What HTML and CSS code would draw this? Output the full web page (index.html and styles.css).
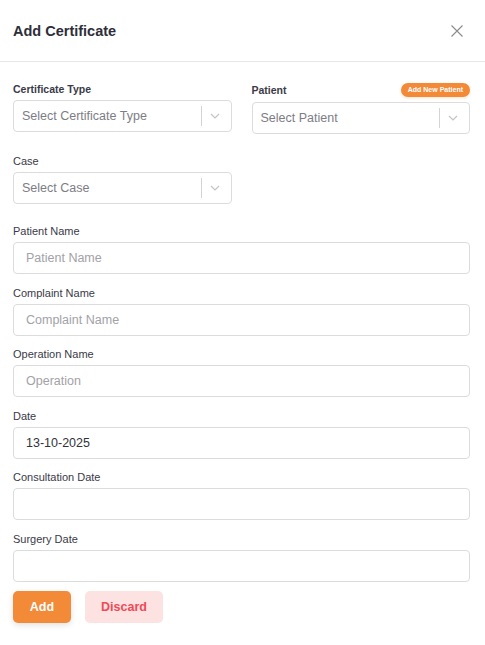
FILE: index.html
```html
<!DOCTYPE html>
<html>
<head>
<meta charset="utf-8">
<link rel="stylesheet" href="styles.css">
</head>
<body>
<div class="modal">
  <div class="header">
    <h1 class="title">Add Certificate</h1>
    <svg class="close" width="12" height="12" viewBox="0 0 12 12"><path d="M0.5 0.5L11.5 11.5M11.5 0.5L0.5 11.5" stroke="#8a8a8a" stroke-width="1.1" fill="none"/></svg>
  </div>
  <div class="body">
    <div class="row">
      <div class="field">
        <div class="label-row"><span class="label strong">Certificate Type</span></div>
        <div class="select">
          <span class="ph-select">Select Certificate Type</span>
          <span class="indicators"><span class="sep"></span><svg width="10" height="6" viewBox="0 0 10 6"><path d="M1 1L5 5L9 1" stroke="#c4c4c4" stroke-width="1.2" fill="none"/></svg></span>
        </div>
      </div>
      <div class="field">
        <div class="label-row tall"><span class="label strong">Patient</span><span class="badge">Add New Patient</span></div>
        <div class="select">
          <span class="ph-select">Select Patient</span>
          <span class="indicators"><span class="sep"></span><svg width="10" height="6" viewBox="0 0 10 6"><path d="M1 1L5 5L9 1" stroke="#c4c4c4" stroke-width="1.2" fill="none"/></svg></span>
        </div>
      </div>
    </div>
    <div class="row case-row">
      <div class="field">
        <div class="label-row"><span class="label">Case</span></div>
        <div class="select">
          <span class="ph-select">Select Case</span>
          <span class="indicators"><span class="sep"></span><svg width="10" height="6" viewBox="0 0 10 6"><path d="M1 1L5 5L9 1" stroke="#c4c4c4" stroke-width="1.2" fill="none"/></svg></span>
        </div>
      </div>
      <div class="field"></div>
    </div>
    <div class="stack">
      <div class="field">
        <div class="label-row"><span class="label">Patient Name</span></div>
        <div class="input"><span class="ph">Patient Name</span></div>
      </div>
      <div class="field">
        <div class="label-row"><span class="label">Complaint Name</span></div>
        <div class="input"><span class="ph">Complaint Name</span></div>
      </div>
      <div class="field">
        <div class="label-row"><span class="label">Operation Name</span></div>
        <div class="input"><span class="ph">Operation</span></div>
      </div>
      <div class="field">
        <div class="label-row"><span class="label">Date</span></div>
        <div class="input"><span class="val">13-10-2025</span></div>
      </div>
      <div class="field">
        <div class="label-row"><span class="label">Consultation Date</span></div>
        <div class="input"></div>
      </div>
      <div class="field">
        <div class="label-row"><span class="label">Surgery Date</span></div>
        <div class="input"></div>
      </div>
    </div>
    <div class="actions">
      <button class="btn add">Add</button>
      <button class="btn discard">Discard</button>
    </div>
  </div>
</div>
</body>
</html>
```
FILE: styles.css
```css
* { box-sizing: border-box; }
html, body { margin: 0; padding: 0; background: #fff; }
body { font-family: "Liberation Sans", Arial, sans-serif; color: #33333f; }
.modal { width: 485px; }
.header {
  height: 62px;
  display: flex;
  align-items: center;
  justify-content: space-between;
  padding: 0 22px 0 13px;
  border-bottom: 1px solid #e6e6e6;
}
.title { margin: 0; font-size: 14.5px; font-weight: 700; color: #2e2e3a; }
.close { display: block; margin-top: 1px; }
.body { padding: 20px 15px 20px 13px; }
.row { display: grid; grid-template-columns: 1fr 1fr; column-gap: 20px; }
.case-row { margin-top: 20px; }
.stack { display: flex; flex-direction: column; gap: 11.6px; margin-top: 20px; }
.label-row { display: flex; align-items: center; justify-content: space-between; height: 14px; margin-bottom: 4px; }
.label-row.tall { height: 16px; margin-bottom: 4px; }
.label { font-size: 11px; color: #3a3a48; }
.label.strong { font-size: 10.5px; font-weight: 700; }
.badge {
  background: #f28a37;
  color: #fff;
  font-size: 7px;
  font-weight: 700;
  line-height: 14px;
  height: 14px;
  padding: 0 7px;
  border-radius: 7px;
  box-shadow: 0 1px 3px rgba(242, 138, 55, 0.25);
}
.select {
  height: 32px;
  border: 1px solid #dcdcdc;
  border-radius: 4px;
  display: flex;
  align-items: center;
  justify-content: space-between;
  padding-left: 8px;
}
.ph-select { font-size: 12.5px; color: #7d7d85; }
.indicators { display: flex; align-items: center; height: 100%; }
.sep { width: 1px; height: 20px; background: #d4d4d4; }
.indicators svg { display: block; margin: 0 11px 0 8px; }
.input {
  height: 32px;
  border: 1px solid #dcdcdc;
  border-radius: 4px;
  display: flex;
  align-items: center;
  padding-left: 12px;
}
.ph { font-size: 12.5px; color: #a2a2a8; }
.val { font-size: 12.5px; color: #33333a; }
.actions { display: flex; gap: 14px; margin-top: 9px; }
.btn {
  height: 32px;
  border: none;
  border-radius: 5px;
  font-family: "Liberation Sans", Arial, sans-serif;
  font-size: 12.5px;
  font-weight: 700;
  padding: 0;
}
.add { width: 58px; background: #f28a37; color: #fff; box-shadow: 0 2px 6px rgba(0,0,0,0.12); }
.discard { width: 78px; background: #fde2e2; color: #ef4a57; }
```
